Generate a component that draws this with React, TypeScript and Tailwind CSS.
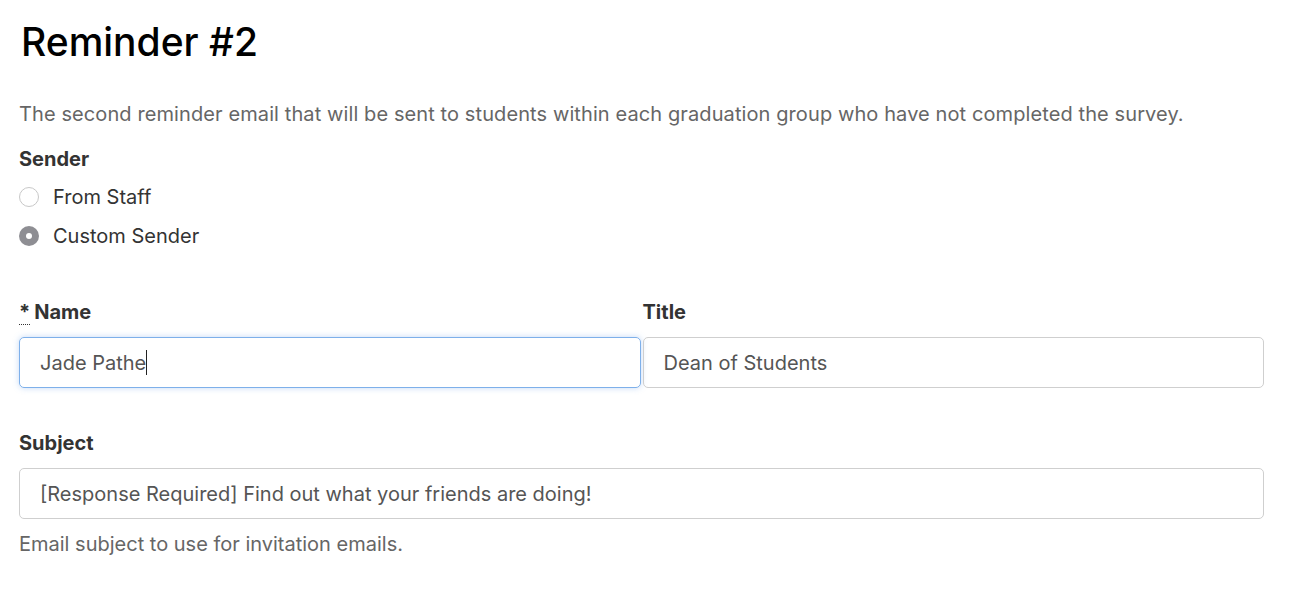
export default function App() {
  return (
    <div className="min-h-[600px] bg-white font-['Inter',sans-serif] pl-[19px] pr-[30px] pt-[18px] text-[#333]">
      <h1 className="text-[39px] leading-[48px] font-medium text-black pl-[2px]">Reminder #2</h1>

      <p className="mt-[34px] text-[20px] leading-[28px] tracking-[0.1px] text-[#666]">
        The second reminder email that will be sent to students within each graduation group who have not completed the survey.
      </p>

      <div className="mt-[17px]">
        <div className="text-[20px] leading-[28px] font-bold">Sender</div>
        <label className="mt-[4px] flex items-center gap-[14px] h-[39px]">
          <span className="w-[20px] h-[20px] rounded-full border border-[#c8c8c8] bg-white" />
          <span className="text-[20px] text-[#333]">From Staff</span>
        </label>
        <label className="flex items-center gap-[14px] h-[39px]">
          <span className="w-[20px] h-[20px] rounded-full bg-[#8e8e93] flex items-center justify-center">
            <span className="w-[6px] h-[6px] rounded-full bg-white" />
          </span>
          <span className="text-[20px] text-[#333]">Custom Sender</span>
        </label>
      </div>

      <div className="mt-[43px] grid grid-cols-2 gap-x-[2px]">
        <div>
          <div className="text-[20px] leading-[28px] font-bold mb-[11px]">
            <abbr className="no-underline border-b border-dotted border-[#333]">*</abbr>
            <span className="ml-[4px]">Name</span>
          </div>
          <div className="h-[51px] rounded-[5px] border border-[#7eb0ea] shadow-[0_0_6px_rgba(90,150,230,0.35)] flex items-center pl-[20px] text-[20px] text-[#555]">
            Jade Pathe<span className="inline-block w-px h-[25px] bg-[#222]" />
          </div>
        </div>
        <div>
          <div className="text-[20px] leading-[28px] font-bold mb-[11px]">Title</div>
          <div className="h-[51px] rounded-[5px] border border-[#cfcfcf] flex items-center pl-[20px] text-[20px] text-[#555]">
            Dean of Students
          </div>
        </div>
      </div>

      <div className="mt-[41px]">
        <div className="text-[20px] leading-[28px] font-bold mb-[11px]">Subject</div>
        <div className="h-[51px] rounded-[5px] border border-[#cfcfcf] flex items-center pl-[20px] text-[20px] text-[#555]">
          [Response Required] Find out what your friends are doing!
        </div>
        <p className="mt-[11px] text-[20px] leading-[28px] text-[#666]">Email subject to use for invitation emails.</p>
      </div>
    </div>
  )
}
